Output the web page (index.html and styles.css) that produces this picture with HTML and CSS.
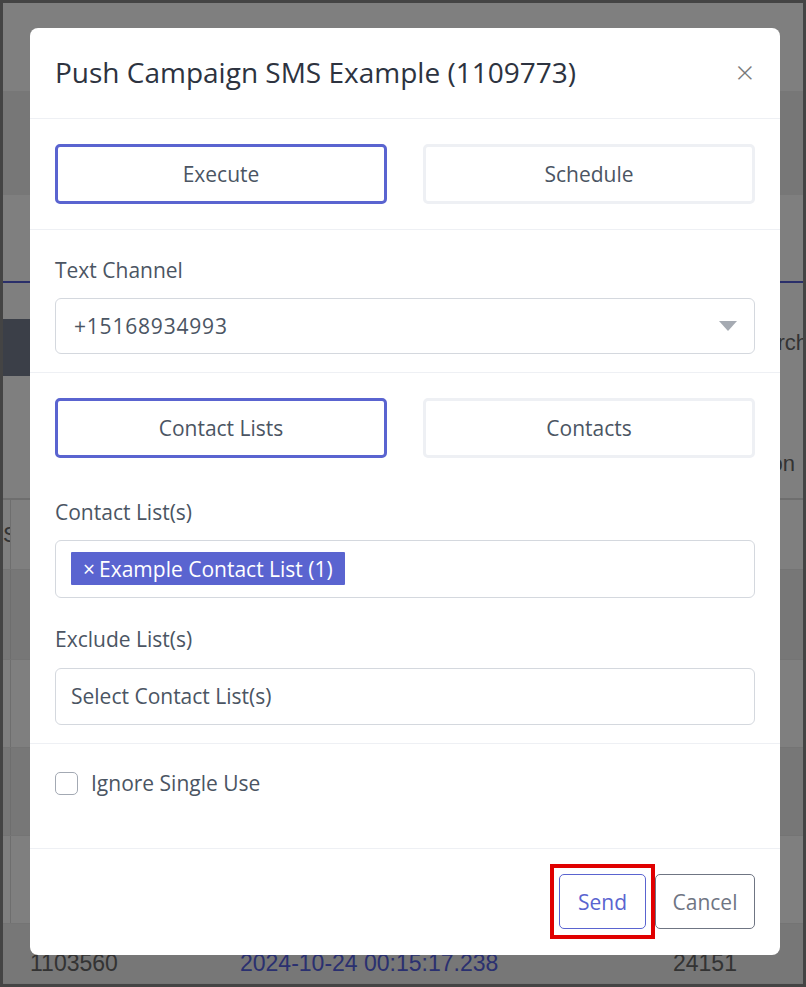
FILE: index.html
```html
<!DOCTYPE html>
<html lang="en">
<head>
  <meta charset="UTF-8">
  <title>Push Campaign SMS Example</title>
  <link rel="stylesheet" href="styles.css">
</head>
<body>
  <div class="screen">
    <!-- page behind the dialog -->
    <div class="page">
      <div class="app-top"></div>
      <div class="app-band"></div>
      <div class="tabs"></div>
      <div class="toolbar">
        <span class="tool-btn"></span>
        <span class="search-label">Search</span>
      </div>
      <div class="table">
        <div class="row head"><span class="cell first"></span><span class="cell grow"></span><span class="cell end">Action</span></div>
        <div class="row"><span class="cell first">Status</span><span class="cell grow"></span></div>
        <div class="row striped"><span class="cell first"></span><span class="cell grow"></span></div>
        <div class="row"><span class="cell first"></span><span class="cell grow"></span></div>
        <div class="row striped"><span class="cell first"></span><span class="cell grow"></span></div>
        <div class="row"><span class="cell first"></span><span class="cell grow"></span></div>
        <div class="row last">
          <span class="cell id">1103560</span>
          <span class="cell date">2024-10-24 00:15:17.238</span>
          <span class="cell count">24151</span>
        </div>
      </div>
    </div>

    <div class="backdrop">
      <div class="modal">
        <div class="modal-header">
          <h2 class="modal-title">Push Campaign SMS Example (1109773)</h2>
          <button class="close-btn">&times;</button>
        </div>

        <div class="modal-section">
          <div class="toggle-group">
            <button class="toggle active">Execute</button>
            <button class="toggle">Schedule</button>
          </div>
        </div>

        <div class="modal-section channel">
          <label class="field-label">Text Channel</label>
          <div class="select">
            <span class="select-value">+15168934993</span>
            <span class="caret"></span>
          </div>
        </div>

        <div class="modal-section lists">
          <div class="toggle-group">
            <button class="toggle active">Contact Lists</button>
            <button class="toggle">Contacts</button>
          </div>

          <div class="form-group first-group">
            <label class="field-label">Contact List(s)</label>
            <div class="multi-select">
              <span class="tag"><span class="tag-x">&times;</span>Example Contact List (1)</span>
            </div>
          </div>

          <div class="form-group">
            <label class="field-label">Exclude List(s)</label>
            <div class="multi-select empty">Select Contact List(s)</div>
          </div>
        </div>

        <div class="modal-section options">
          <label class="check">
            <span class="check-box"></span>
            Ignore Single Use
          </label>
        </div>

        <div class="modal-footer">
          <span class="highlight">
            <button class="btn btn-send">Send</button>
          </span>
          <button class="btn btn-cancel">Cancel</button>
        </div>
      </div>
    </div>
  </div>
</body>
</html>
```

FILE: styles.css
```css
* {
  box-sizing: border-box;
}

body {
  margin: 0;
  background: #444;
  font-family: 'Open Sans', 'Noto Sans', sans-serif;
}

.screen {
  width: 806px;
  height: 987px;
  border: 3px solid #444;
  position: relative;
  overflow: hidden;
  background: #fff;
}

/* ---- page behind ---- */
.page {
  font-family: 'Liberation Sans', Arial, sans-serif;
  color: #666;
}

.app-top {
  height: 88px;
}

.app-band {
  height: 104px;
  background: #eee;
}

.tabs {
  height: 88px;
  border-bottom: 2px solid #545ed4;
}

.toolbar {
  height: 147px;
  display: flex;
  justify-content: space-between;
  align-items: flex-start;
  padding-top: 36px;
}

.tool-btn {
  width: 120px;
  height: 57px;
  background: #767e90;
  border-radius: 0 4px 4px 0;
}

.search-label {
  font-size: 22px;
  margin-top: 11px;
  margin-right: -5px;
}

.row {
  display: flex;
  height: 88px;
  border-bottom: 1px solid #e8e8e8;
}

.row.head {
  height: 70px;
  border-bottom: 2px solid #ddd;
  align-items: center;
}

.row.striped {
  background: #eee;
}

.row:nth-child(2) {
  height: 70px;
}

.row:nth-child(3) {
  height: 90px;
}

.cell {
  font-size: 22px;
  display: flex;
  align-items: center;
}

.cell.first {
  width: 8px;
  border-right: 1px solid #ddd;
  justify-content: flex-end;
  overflow: hidden;
  white-space: nowrap;
  direction: rtl;
}

.cell.grow {
  flex: 1;
}

.cell.end {
  margin-right: 8px;
}

.row.last {
  height: 60px;
  background: #eee;
  align-items: flex-end;
  padding-bottom: 6px;
}

.cell.id {
  width: 237px;
  padding-left: 27px;
  font-size: 23px;
}

.cell.date {
  width: 433px;
  color: #5460e0;
  font-size: 23px;
}

.cell.count {
  font-size: 23px;
}

/* ---- modal ---- */
.backdrop {
  position: absolute;
  inset: 0;
  background: rgba(0, 0, 0, 0.5);
  padding: 25px 0 0 27px;
}

.modal {
  width: 750px;
  height: 927px;
  background: #fff;
  border-radius: 8px;
  color: #4b5563;
}

.modal-header {
  height: 91px;
  display: flex;
  align-items: center;
  justify-content: space-between;
  padding: 0 25px 3px;
  border-bottom: 1px solid #eef0f4;
}

.modal-title {
  margin: 0;
  font-size: 28px;
  font-weight: 400;
  color: #2d3340;
}

.close-btn {
  border: none;
  background: none;
  font-size: 32px;
  font-weight: 300;
  color: #7a7a7a;
  padding: 0;
  margin-right: 1px;
  line-height: 1;
  font-family: 'Open Sans', sans-serif;
}

.modal-section {
  padding: 25px;
  border-bottom: 1px solid #eef0f4;
}

.toggle-group {
  display: grid;
  grid-template-columns: 332px 332px;
  gap: 36px;
}

.toggle {
  height: 60px;
  background: #fff;
  border: 3px solid #eef0f4;
  border-radius: 5px;
  font-family: inherit;
  font-size: 21px;
  color: #4b5563;
}

.toggle.active {
  border-color: #5a64d0;
}

.field-label {
  display: block;
  font-size: 21px;
  line-height: 28px;
  margin-bottom: 14px;
}

.modal-section.channel {
  padding-top: 26px;
  padding-bottom: 18px;
}

.select {
  height: 56px;
  border: 1px solid #d4d8de;
  border-radius: 6px;
  display: flex;
  align-items: center;
  justify-content: space-between;
  padding: 0 17px 0 18px;
  font-size: 21px;
}

.select-value {
  letter-spacing: 0.8px;
}

.caret {
  width: 0;
  height: 0;
  border-left: 9px solid transparent;
  border-right: 9px solid transparent;
  border-top: 10px solid #a5aab2;
}

.modal-section.lists {
  padding-bottom: 18px;
}

.form-group {
  margin-top: 27px;
}

.form-group.first-group {
  margin-top: 40px;
}

.form-group + .form-group .field-label {
  margin-bottom: 15px;
}

.multi-select {
  min-height: 56px;
  border: 1px solid #d4d8de;
  border-radius: 6px;
  padding: 11px 15px 12px;
  font-size: 21px;
}

.multi-select.empty {
  line-height: 32px;
}

.tag {
  display: inline-flex;
  align-items: center;
  height: 33px;
  background: #5a64d0;
  color: #fff;
  padding: 0 12px;
  font-size: 21px;
  border-radius: 1px;
}

.tag-x {
  margin-right: 4px;
}

.modal-section.options {
  height: 105px;
  padding-top: 25px;
}

.check {
  display: flex;
  align-items: center;
  gap: 13px;
  font-size: 21px;
  line-height: 29px;
}

.check-box {
  width: 23px;
  height: 23px;
  border: 1px solid #a3a9b3;
  border-radius: 5px;
}

.modal-footer {
  display: flex;
  justify-content: flex-end;
  align-items: center;
  padding: 15px 25px 0 0;
}

.highlight {
  border: 4px solid #e00000;
  padding: 6px 5px;
  display: flex;
}

.btn {
  height: 55px;
  background: #fff;
  border-radius: 5px;
  font-family: inherit;
  font-size: 21px;
  padding: 0;
}

.btn-send {
  width: 87px;
  border: 1px solid #5a64d0;
  color: #5a64d0;
}

.btn-cancel {
  width: 100px;
  border: 1px solid #6f7583;
  color: #6f7583;
}
```
